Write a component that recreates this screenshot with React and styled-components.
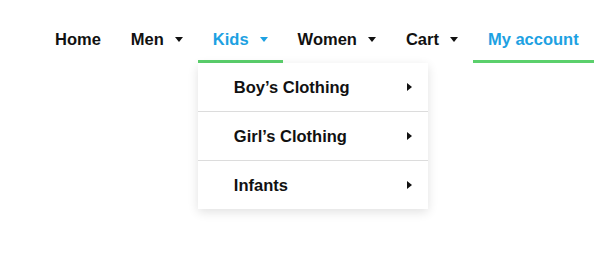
import styled, { createGlobalStyle } from "styled-components";

const GlobalStyle = createGlobalStyle`
    body {
        margin: 0;
        background: #fff;
        font-family: "Liberation Sans", Arial, sans-serif;
    }
`;

const navItems = [
    { label: "Home" },
    { label: "Men", caret: true },
    { label: "Kids", caret: true, active: true, open: true },
    { label: "Women", caret: true },
    { label: "Cart", caret: true },
    { label: "My account", active: true },
];

const kidsMenu = ["Boy’s Clothing", "Girl’s Clothing", "Infants"];

export default function App() {
    return (
        <Page>
            <GlobalStyle />
            <Nav>
                {navItems.map((item) => (
                    <NavItem key={item.label}>
                        <NavLink $active={item.active}>
                            {item.label}
                            {item.caret && <Caret />}
                        </NavLink>
                        {item.open && (
                            <Dropdown>
                                {kidsMenu.map((sub) => (
                                    <DropdownRow key={sub}>
                                        {sub}
                                        <SideArrow />
                                    </DropdownRow>
                                ))}
                            </Dropdown>
                        )}
                    </NavItem>
                ))}
            </Nav>
        </Page>
    );
}

const Page = styled.div`
    min-height: 258px;
    background: #fff;
`;

const Nav = styled.ul`
    display: flex;
    margin: 0;
    padding: 19px 0 0 40px;
    list-style: none;
`;

const NavItem = styled.li`
    position: relative;
`;

const NavLink = styled.a`
    display: flex;
    align-items: center;
    gap: 11px;
    height: 41px;
    padding: 0 15px;
    font-size: 16.5px;
    font-weight: bold;
    color: ${(p) => (p.$active ? "#1da1e2" : "#111")};
    border-bottom: 3px solid ${(p) => (p.$active ? "#5bd06c" : "transparent")};
    cursor: pointer;
`;

const Caret = styled.span`
    width: 0;
    height: 0;
    border-left: 4px solid transparent;
    border-right: 4px solid transparent;
    border-top: 5px solid currentColor;
`;

const Dropdown = styled.div`
    position: absolute;
    top: 44px;
    left: 0;
    z-index: 2;
    width: 230px;
    background: #fff;
    box-shadow: 0 3px 10px rgba(0, 0, 0, 0.12);
`;

const DropdownRow = styled.div`
    display: flex;
    align-items: center;
    justify-content: space-between;
    height: 48px;
    padding: 0 16px 0 36px;
    font-size: 16.5px;
    font-weight: bold;
    color: #111;

    & + & {
        border-top: 1px solid #dcdcdc;
    }
`;

const SideArrow = styled.span`
    width: 0;
    height: 0;
    border-top: 4px solid transparent;
    border-bottom: 4px solid transparent;
    border-left: 5px solid #111;
`;
